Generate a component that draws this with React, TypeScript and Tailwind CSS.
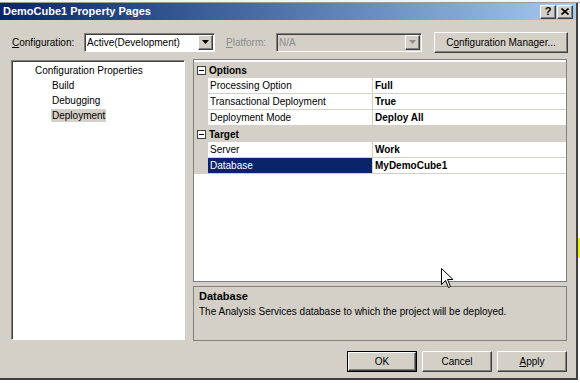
import React from "react";

const raised =
  "border border-t-white border-l-white border-b-[#404040] border-r-[#404040] shadow-[inset_-1px_-1px_0_#808080]";
const sunken =
  "border border-t-[#808080] border-l-[#808080] border-b-white border-r-white shadow-[inset_1px_1px_0_#404040]";

function Combo({ text, disabled, width }: { text: string; disabled?: boolean; width: string }) {
  return (
    <div className={`${sunken} ${width} h-[19px] flex items-center ${disabled ? "bg-[#d4d0c8]" : "bg-white"}`}>
      <span className={`flex-1 pl-[2px] ${disabled ? "text-[#8c8c8c]" : "text-black"}`}>{text}</span>
      <div className={`${raised} bg-[#d4d0c8] w-[15px] h-[15px] mr-[1px] flex items-center justify-center`}>
        <svg width="7" height="4" viewBox="0 0 7 4">
          <path d="M0 0h7L3.5 4z" fill={disabled ? "#8c8c8c" : "#000"} />
        </svg>
      </div>
    </div>
  );
}

function Button({ children, def, className = "" }: { children: React.ReactNode; def?: boolean; className?: string }) {
  const inner = (
    <div className={`${raised} bg-[#d4d0c8] h-full flex items-center justify-center`}>{children}</div>
  );
  return (
    <div className={`h-[21px] ${def ? "border border-black" : ""} ${className}`}>{inner}</div>
  );
}

function Minus() {
  return (
    <div className="w-[9px] h-[9px] border border-[#404040] bg-white flex items-center justify-center">
      <div className="w-[5px] h-[1px] bg-black" />
    </div>
  );
}

function Category({ label }: { label: string }) {
  return (
    <div className="h-[16px] flex items-center bg-[#d4d0c8]">
      <div className="w-[14px] flex justify-center">
        <Minus />
      </div>
      <span className="font-bold pl-[1px]">{label}</span>
    </div>
  );
}

function Prop({ name, value, selected }: { name: string; value: string; selected?: boolean }) {
  return (
    <div className="h-[16px] flex">
      <div className="w-[14px] bg-[#d4d0c8]" />
      <div
        className={`w-[165px] flex items-center pl-[2px] border-r border-b border-[#d4d0c8] ${
          selected ? "bg-[#0a246a] text-white" : "bg-white"
        }`}
      >
        {name}
      </div>
      <div className="flex-1 flex items-center pl-[2px] bg-white font-bold border-b border-[#d4d0c8]">
        {value}
      </div>
    </div>
  );
}

export default function App() {
  return (
    <div
      className="w-[580px] h-[383px] bg-white relative overflow-hidden text-[10px] text-black"
      style={{ fontFamily: '"Liberation Sans", Arial, sans-serif' }}
    >
      {/* window behind, top edge */}
      <div className="h-[3px] bg-[#f4f4f4] border-b border-[#9a9a9a]" />

      {/* dialog */}
      <div className="w-[578px] h-[377px] bg-[#d4d0c8] border-r-2 border-b-2 border-r-[#404040] border-b-[#404040] flex flex-col">
        {/* title bar */}
        <div className="h-[17px] flex items-center bg-gradient-to-r from-[#0a246a] to-[#a6caf0] pl-[3px] pr-[3px]">
          <span className="flex-1 text-white font-bold text-[11px]">DemoCube1 Property Pages</span>
          <div className={`${raised} bg-[#d4d0c8] w-[16px] h-[14px] flex items-center justify-center font-bold text-[11px]`}>
            ?
          </div>
          <div className={`${raised} bg-[#d4d0c8] w-[16px] h-[14px] flex items-center justify-center ml-[1px]`}>
            <svg width="8" height="7" viewBox="0 0 8 7">
              <path d="M0.5 0.5L7.5 6.5M7.5 0.5L0.5 6.5" stroke="#000" strokeWidth="1.6" />
            </svg>
          </div>
        </div>

        {/* configuration row */}
        <div className="flex items-center h-[22px] mt-[11px] pl-[12px]">
          <span className="w-[72px]">
            <span className="underline">C</span>onfiguration:
          </span>
          <Combo text="Active(Development)" width="w-[131px]" />
          <span className="ml-[11px] w-[50px] text-[#8c8c8c]">
            <span className="underline">P</span>latform:
          </span>
          <Combo text="N/A" disabled width="w-[146px]" />
          <Button className="ml-[12px] w-[134px]">
            <span>
              C<span className="underline">o</span>nfiguration Manager...
            </span>
          </Button>
        </div>

        {/* main area */}
        <div className="flex mt-[7px] pl-[11px] h-[281px]">
          <div className={`${sunken} w-[174px] h-[280px] bg-white pt-[2px]`}>
            <div className="h-[15px] flex items-center pl-[23px]">Configuration Properties</div>
            <div className="h-[15px] flex items-center pl-[40px]">Build</div>
            <div className="h-[15px] flex items-center pl-[40px]">Debugging</div>
            <div className="h-[15px] flex items-center pl-[39px]">
              <span className="bg-[#d4d0c8] px-[1px] h-[13px] flex items-center">Deployment</span>
            </div>
          </div>

          <div className="ml-[8px] w-[374px] flex flex-col">
            {/* property grid */}
            <div className="h-[223px] border border-[#808080] bg-white -mt-[1px] pt-[2px]">
              <Category label="Options" />
              <Prop name="Processing Option" value="Full" />
              <Prop name="Transactional Deployment" value="True" />
              <Prop name="Deployment Mode" value="Deploy All" />
              <Category label="Target" />
              <Prop name="Server" value="Work" />
              <Prop name="Database" value="MyDemoCube1" selected />
            </div>
            {/* description */}
            <div className="mt-[4px] h-[55px] border border-[#808080] px-[5px] pt-[2px]">
              <div className="font-bold text-[11px] leading-[15px]">Database</div>
              <div className="leading-[16px]">The Analysis Services database to which the project will be deployed.</div>
            </div>
          </div>
        </div>

        {/* buttons */}
        <div className="flex justify-end gap-[5px] pr-[9px] mt-[10px]">
          <Button def className="w-[70px]">OK</Button>
          <Button className="w-[70px]">Cancel</Button>
          <Button className="w-[70px]">
            <span>
              <span className="underline">A</span>pply
            </span>
          </Button>
        </div>
      </div>

      {/* window behind, right edge */}
      <div className="absolute left-[578px] top-[238px] w-[2px] h-[20px] bg-[#f0f000]" />

      {/* mouse pointer */}
      <svg className="absolute left-[441px] top-[268px]" width="13" height="20" viewBox="0 0 13 20">
        <path
          d="M0.5 0.5V16.5L4.5 12.5L7.5 19.5L9.5 18.5L6.5 11.5H12L0.5 0.5Z"
          fill="#fff"
          stroke="#000"
          strokeWidth="1"
        />
      </svg>
    </div>
  );
}
